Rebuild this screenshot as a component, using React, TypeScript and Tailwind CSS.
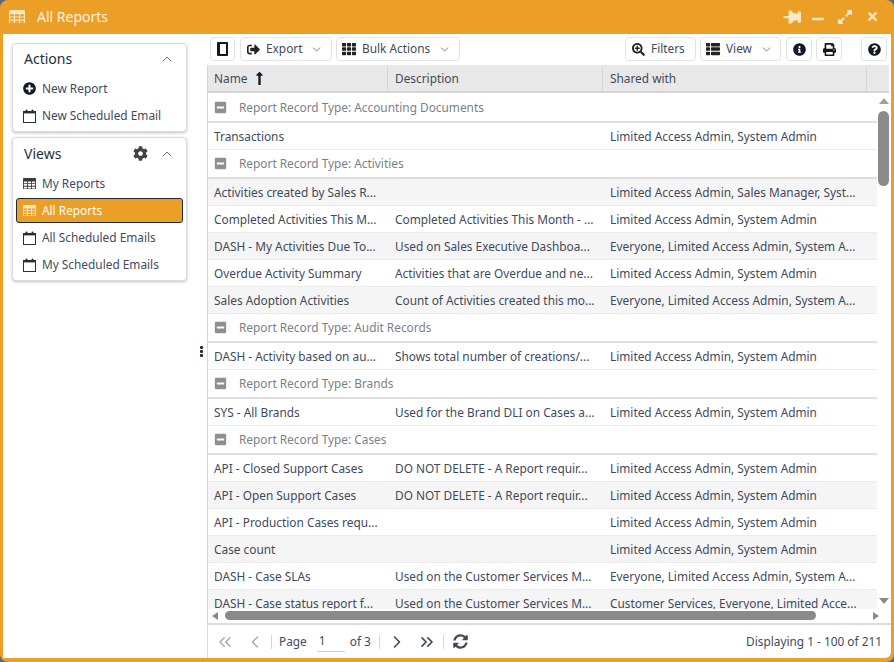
import { ChevronDown, ChevronUp, ChevronLeft, ChevronRight, ChevronsLeft, ChevronsRight } from "lucide-react";
import {
  FaCog,
  FaExpandAlt,
  FaInfoCircle,
  FaLongArrowAltUp,
  FaMinus,
  FaMinusSquare,
  FaPlusCircle,
  FaPrint,
  FaQuestionCircle,
  FaSearchPlus,
  FaSignOutAlt,
  FaSyncAlt,
  FaTh,
  FaThList,
  FaThumbtack,
  FaTimes,
} from "react-icons/fa";

type Row = { name: string; desc?: string; shared: string };
type Group = { title: string; rows: Row[] };

const LA = "Limited Access Admin, System Admin";
const EV = "Everyone, Limited Access Admin, System A...";

const GROUPS: Group[] = [
  { title: "Accounting Documents", rows: [{ name: "Transactions", shared: LA }] },
  {
    title: "Activities",
    rows: [
      { name: "Activities created by Sales R...", shared: "Limited Access Admin, Sales Manager, Syst..." },
      { name: "Completed Activities This M...", desc: "Completed Activities This Month - ...", shared: LA },
      { name: "DASH - My Activities Due To...", desc: "Used on Sales Executive Dashboa...", shared: EV },
      { name: "Overdue Activity Summary", desc: "Activities that are Overdue and ne...", shared: LA },
      { name: "Sales Adoption Activities", desc: "Count of Activities created this mo...", shared: EV },
    ],
  },
  {
    title: "Audit Records",
    rows: [{ name: "DASH - Activity based on au...", desc: "Shows total number of creations/...", shared: LA }],
  },
  { title: "Brands", rows: [{ name: "SYS - All Brands", desc: "Used for the Brand DLI on Cases a...", shared: LA }] },
  {
    title: "Cases",
    rows: [
      { name: "API - Closed Support Cases", desc: "DO NOT DELETE - A Report requir...", shared: LA },
      { name: "API - Open Support Cases", desc: "DO NOT DELETE - A Report requir...", shared: LA },
      { name: "API - Production Cases requ...", shared: LA },
      { name: "Case count", shared: LA },
      { name: "DASH - Case SLAs", desc: "Used on the Customer Services M...", shared: EV },
      {
        name: "DASH - Case status report f...",
        desc: "Used on the Customer Services M...",
        shared: "Customer Services, Everyone, Limited Acce...",
      },
    ],
  },
];

function TableIcon({ size = 13, className = "" }: { size?: number; className?: string }) {
  return (
    <svg width={size} height={(size * 13) / 15} viewBox="0 0 15 13" className={`shrink-0 ${className}`} fill="currentColor">
      <path
        fillRule="evenodd"
        d="M0 1a1 1 0 0 1 1-1h13a1 1 0 0 1 1 1v11a1 1 0 0 1-1 1H1a1 1 0 0 1-1-1V1zm1 3v2h3.6V4H1zm4.6 0v2h3.8V4H5.6zm4.8 0v2H14V4h-3.6zM1 7v2h3.6V7H1zm4.6 0v2h3.8V7H5.6zm4.8 0v2H14V7h-3.6zM1 10v2h3.6v-2H1zm4.6 0v2h3.8v-2H5.6zm4.8 0v2H14v-2h-3.6z"
      />
    </svg>
  );
}

function CalendarIcon() {
  return (
    <svg width="13" height="14" viewBox="0 0 13 14" className="shrink-0">
      <rect x="0.5" y="2.5" width="12" height="11" fill="#fff" stroke="#2b2f36" strokeWidth="1" />
      <rect x="0" y="2" width="13" height="2.4" fill="#2b2f36" />
      <rect x="2.5" y="0.5" width="2" height="3" rx="1" fill="#2b2f36" />
      <rect x="8.5" y="0.5" width="2" height="3" rx="1" fill="#2b2f36" />
    </svg>
  );
}

function SideItem({ icon, label, active }: { icon: React.ReactNode; label: string; active?: boolean }) {
  return (
    <div
      className={`mx-[3px] flex h-[25px] items-center gap-[6px] rounded-[3px] border pl-[5px] ${
        active ? "border-[#1f2937] bg-[#ec9f27] text-white" : "border-transparent text-[#3f4a5a]"
      }`}
    >
      <span className="flex w-[14px] justify-center">{icon}</span>
      <span>{label}</span>
    </div>
  );
}

function ToolButton({ children, className = "" }: { children: React.ReactNode; className?: string }) {
  return (
    <div className={`flex h-6 items-center rounded-[4px] border border-[#e3e3e3] bg-white text-[#3f4a5a] ${className}`}>
      {children}
    </div>
  );
}

export default function App() {
  return (
    <div className="h-[662px] w-[894px] overflow-hidden bg-[#5f6670] font-['Open_Sans',sans-serif] text-[11.85px]">
      <div className="flex h-full flex-col rounded-[8px] bg-[#ec9f27] px-[3px] pb-[4px]">
        <div className="flex h-[34px] shrink-0 items-center pb-[1px] pl-[6px] pr-[12px] text-white">
          <TableIcon size={16} className="text-[#fbe6c5]" />
          <span className="ml-[12px] text-[14px] text-[#fdf3e2]">All Reports</span>
          <div className="ml-auto flex items-center text-[#fbe6c5]">
            <FaThumbtack className="rotate-90 text-[18px]" />
            <FaMinus className="ml-[10px] mt-[5px] text-[14px]" />
            <FaExpandAlt className="ml-[12px] text-[16px]" />
            <FaTimes className="ml-[13px] text-[13px]" />
          </div>
        </div>

        <div className="flex min-h-0 flex-1 rounded-br-[6px] bg-white">
          <aside className="flex w-[204px] shrink-0 flex-col gap-[5px] pl-[9px] pr-[20px] pt-[9px]">
            <section className="h-[89px] rounded-[4px] border border-[#dcdcdc] bg-white shadow-[0_1px_3px_rgba(0,0,0,0.25)]">
              <div className="flex h-[31px] items-center pb-[2px] pl-[11px] pr-[11px]">
                <span className="text-[14px] text-[#27303c]">Actions</span>
                <ChevronUp size={16} strokeWidth={1.25} className="ml-auto text-[#555]" />
              </div>
              <div className="mt-[1px] flex flex-col gap-[2px]">
                <SideItem icon={<FaPlusCircle className="text-[13px] text-[#111827]" />} label="New Report" />
                <SideItem icon={<CalendarIcon />} label="New Scheduled Email" />
              </div>
            </section>
            <section className="h-[144px] rounded-[4px] border border-[#dcdcdc] bg-white shadow-[0_1px_3px_rgba(0,0,0,0.25)]">
              <div className="flex h-[31px] items-center pl-[11px] pr-[11px]">
                <span className="text-[14px] text-[#27303c]">Views</span>
                <FaCog className="ml-auto text-[15px] text-[#444]" />
                <ChevronUp size={16} strokeWidth={1.25} className="ml-[11px] text-[#555]" />
              </div>
              <div className="mt-[2px] flex flex-col gap-[2px]">
                <SideItem icon={<TableIcon size={13} className="text-[#3a3a3a]" />} label="My Reports" />
                <SideItem icon={<TableIcon size={13} className="text-[#fbe6c5]" />} label="All Reports" active />
                <SideItem icon={<CalendarIcon />} label="All Scheduled Emails" />
                <SideItem icon={<CalendarIcon />} label="My Scheduled Emails" />
              </div>
            </section>
          </aside>

          <main className="relative flex min-w-0 flex-1 flex-col">
            <div className="absolute left-[-7px] top-[312px] flex flex-col gap-[1px]">
              <span className="h-[3px] w-[3px] rounded-[1px] bg-[#1f2a3d]" />
              <span className="h-[3px] w-[3px] rounded-[1px] bg-[#1f2a3d]" />
              <span className="h-[3px] w-[3px] rounded-[1px] bg-[#1f2a3d]" />
            </div>

            <div className="flex h-[31px] shrink-0 items-start gap-[4px] pl-[3px] pt-[3px]">
              <ToolButton className="w-[25px] justify-center">
                <span className="flex h-[14px] w-[11px] justify-end rounded-[1px] bg-[#111827]">
                  <span className="mr-[2px] mt-[2px] h-[10px] w-[6px] bg-white" />
                </span>
              </ToolButton>
              <ToolButton className="ml-[1px] w-[92px] pl-[6px]">
                <FaSignOutAlt className="text-[13px] text-[#222]" />
                <span className="ml-[6px]">Export</span>
                <ChevronDown size={13} strokeWidth={1.25} className="ml-[8px]" />
              </ToolButton>
              <ToolButton className="w-[124px] pl-[5px]">
                <FaTh className="text-[14px] text-[#222]" />
                <span className="ml-[6px]">Bulk Actions</span>
                <ChevronDown size={13} strokeWidth={1.25} className="ml-[8px]" />
              </ToolButton>
              <ToolButton className="ml-auto w-[71px] pl-[6px]">
                <FaSearchPlus className="text-[13px] text-[#222]" />
                <span className="ml-[6px]">Filters</span>
              </ToolButton>
              <ToolButton className="w-[81px] pl-[5px]">
                <FaThList className="text-[14px] text-[#222]" />
                <span className="ml-[6px]">View</span>
                <ChevronDown size={13} strokeWidth={1.25} className="ml-[8px]" />
              </ToolButton>
              <ToolButton className="ml-[1px] w-[26px] justify-center">
                <FaInfoCircle className="text-[13px] text-[#111827]" />
              </ToolButton>
              <ToolButton className="w-[26px] justify-center">
                <FaPrint className="text-[13px] text-[#111827]" />
              </ToolButton>
              <ToolButton className="ml-[15px] mr-[4px] w-[26px] justify-center">
                <FaQuestionCircle className="text-[13px] text-[#111827]" />
              </ToolButton>
            </div>

            <div className="mr-[2px] flex h-[28px] shrink-0 border-b-2 border-l border-[#d6d6d6] bg-[#e8e8e8] pt-[1px] text-[#3f4a5a]">
              <div className="flex w-[180px] items-center border-r border-[#d6d6d6] pl-[6px]">
                <span>Name</span>
                <FaLongArrowAltUp className="ml-[5px] text-[15px] text-[#111827]" />
              </div>
              <div className="flex w-[215px] items-center border-r border-[#d6d6d6] pl-[7px]">Description</div>
              <div className="flex w-[264px] items-center border-r border-[#d6d6d6] pl-[7px]">Shared with</div>
            </div>

            <div className="relative min-h-0 flex-1 overflow-hidden border-l border-[#d6d6d6]">
              <div className="h-full overflow-hidden pt-[1px]">
                {GROUPS.map((g) => (
                  <div key={g.title}>
                    <div className="mr-[14px] flex h-[29px] items-center border-b-2 border-[#dedede] pl-[6px] text-[#7a7f87]">
                      <FaMinusSquare className="text-[13px] text-[#8f8f8f]" />
                      <span className="ml-[12px]">Report Record Type: {g.title}</span>
                    </div>
                    {g.rows.map((r, i) => {
                      const striped = g.rows.length > 1 && i % 2 === (g.title === "Activities" ? 0 : 1);
                      return (
                        <div
                          key={r.name}
                          className={`mr-[14px] flex h-[27px] items-center border-b border-[#ebebeb] pt-[2px] text-[#3f4a5a] ${
                            striped ? "bg-[#f5f5f5]" : ""
                          }`}
                        >
                          <div className="w-[180px] shrink-0 truncate pl-[6px]">{r.name}</div>
                          <div className="w-[215px] shrink-0 truncate pl-[7px]">{r.desc}</div>
                          <div className="truncate pl-[7px]">{r.shared}</div>
                        </div>
                      );
                    })}
                  </div>
                ))}
              </div>

              {/* scrollbars */}
              <div className="absolute bottom-0 left-0 right-[2px] h-[14px] bg-white">
                <span className="absolute left-[4px] top-[3px] h-0 w-0 border-y-[4px] border-r-[6px] border-y-transparent border-r-[#8a8a8a]" />
                <span className="absolute left-[17px] top-[2px] h-[9px] w-[591px] rounded-full bg-[#8a8a8a]" />
                <span className="absolute right-[10px] top-[3px] h-0 w-0 border-y-[4px] border-l-[6px] border-y-transparent border-l-[#8a8a8a]" />
              </div>
              <div className="absolute bottom-[14px] right-[2px] top-0 w-[12px] bg-white">
                <span className="absolute left-[2px] top-[5px] h-0 w-0 border-x-[5px] border-b-[6px] border-x-transparent border-b-[#a0a0a0]" />
                <span className="absolute left-[1px] top-[18px] h-[75px] w-[11px] rounded-full bg-[#8a8a8a]" />
                <span className="absolute bottom-[5px] left-[2px] h-0 w-0 border-x-[5px] border-t-[6px] border-x-transparent border-t-[#8a8a8a]" />
              </div>
            </div>

            <div className="flex h-[35px] shrink-0 items-center border-l border-t-2 border-[#dcdcdc] pl-[7px] pr-[9px] text-[#3f4a5a]">
              <ChevronsLeft size={20} strokeWidth={1.75} className="text-[#a9a9a9]" />
              <ChevronLeft size={20} strokeWidth={1.75} className="ml-[10px] text-[#a9a9a9]" />
              <span className="ml-[6px] h-[14px] border-l border-[#d6d6d6]" />
              <span className="ml-[7px]">Page</span>
              <span className="ml-[10px] flex h-[21px] w-[28px] items-center border-b border-[#cfcfcf] pl-[2px]">1</span>
              <span className="ml-[5px]">of 3</span>
              <span className="ml-[8px] h-[14px] border-l border-[#d6d6d6]" />
              <ChevronRight size={20} strokeWidth={2} className="ml-[7px] text-[#3f4a5a]" />
              <ChevronsRight size={20} strokeWidth={2} className="ml-[10px] text-[#3f4a5a]" />
              <span className="ml-[6px] h-[14px] border-l border-[#d6d6d6]" />
              <FaSyncAlt className="ml-[9px] text-[15px] text-[#3f4a5a]" />
              <span className="ml-auto">Displaying 1 - 100 of 211</span>
            </div>
          </main>
        </div>
      </div>
    </div>
  );
}
